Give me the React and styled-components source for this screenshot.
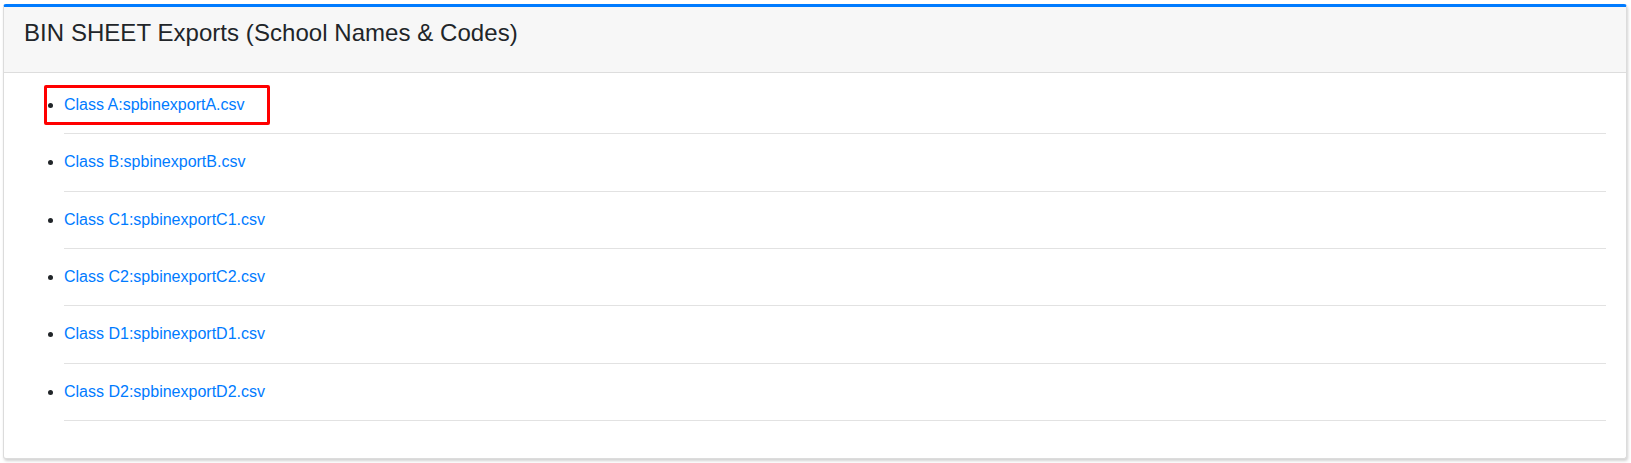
import React from 'react';
import styled, { createGlobalStyle } from 'styled-components';

const exportsList = [
  { label: 'Class A', file: 'spbinexportA.csv', highlighted: true },
  { label: 'Class B', file: 'spbinexportB.csv' },
  { label: 'Class C1', file: 'spbinexportC1.csv' },
  { label: 'Class C2', file: 'spbinexportC2.csv' },
  { label: 'Class D1', file: 'spbinexportD1.csv' },
  { label: 'Class D2', file: 'spbinexportD2.csv' },
];

const App = () => {
  return (
    <Page>
      <GlobalStyle />
      <Card>
        <CardHeader>
          <Title>BIN SHEET Exports (School Names &amp; Codes)</Title>
        </CardHeader>
        <CardBody>
          <ExportList>
            {exportsList.map((item) => (
              <ExportItem key={item.file}>
                {item.highlighted && <Highlight />}
                <ExportLink href="#">
                  {item.label}:{item.file}
                </ExportLink>
              </ExportItem>
            ))}
          </ExportList>
        </CardBody>
      </Card>
    </Page>
  );
};

const GlobalStyle = createGlobalStyle`
  body {
    margin: 0;
    background: #ffffff;
    font-family: "Liberation Sans", Arial, sans-serif;
    color: #212529;
  }
`;

const Page = styled.div`
  padding: 4px 4px 4px 3px;
`;

const Card = styled.section`
  background: #ffffff;
  border: 1px solid #dcdcdc;
  border-top: 3px solid #007bff;
  border-radius: 3px;
  box-shadow: 1px 2px 3px rgba(0, 0, 0, 0.18);
`;

const CardHeader = styled.div`
  background: #f7f7f7;
  border-bottom: 1px solid #dddddd;
  padding: 12px 20px;
`;

const Title = styled.h3`
  margin: 0 0 12px;
  font-size: 24px;
  font-weight: 400;
  line-height: 1.2;
  letter-spacing: 0.05px;
  color: #212529;
`;

const CardBody = styled.div`
  padding: 4px 20px 21px;
`;

const ExportList = styled.ul`
  margin: 0 0 16px;
  padding-left: 40px;
  list-style: disc;
`;

const ExportItem = styled.li`
  position: relative;
  padding: 16.2px 0;
  font-size: 16px;
  line-height: 24px;
  border-bottom: 1px solid #e2e2e2;
`;

const Highlight = styled.span`
  position: absolute;
  left: -20px;
  top: 8px;
  width: 226px;
  height: 40px;
  box-sizing: border-box;
  border: 3px solid #ff0000;
  border-radius: 2px;
  pointer-events: none;
`;

const ExportLink = styled.a`
  color: #007bff;
  text-decoration: none;
`;

export default App;
